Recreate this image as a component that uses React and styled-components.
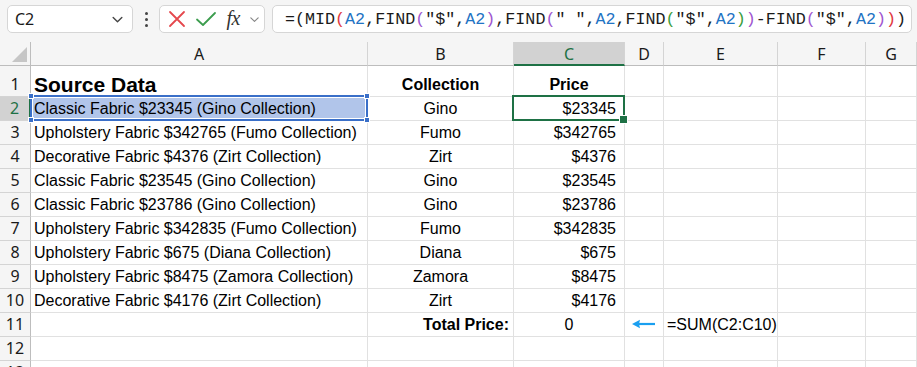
import React from "react";
import styled, { createGlobalStyle, css } from "styled-components";

const Global = createGlobalStyle`
  html, body { margin: 0; padding: 0; background: #ffffff; }
  body { width: 917px; height: 367px; overflow: hidden; }
  * { box-sizing: border-box; }
`;

const CELL_FONT = `"Liberation Sans", Arial, sans-serif`;
const UI_FONT = `"Noto Sans", "Liberation Sans", sans-serif`;

const Page = styled.div`
  width: 917px;
  height: 367px;
  overflow: hidden;
  display: flex;
  flex-direction: column;
  background: #fff;
`;

const Toolbar = styled.div`
  height: 42px;
  flex: none;
  background: #f5f5f5;
  display: flex;
  align-items: flex-start;
  padding: 5px 5px 0 7px;
`;

const Box = styled.div`
  height: 28px;
  background: #ffffff;
  border: 1px solid #d6d6d6;
  border-radius: 5px;
  display: flex;
  align-items: center;
`;

const NameBox = styled(Box)`
  width: 126px;
  padding: 0 8px 0 7px;
  justify-content: space-between;
  font-family: ${UI_FONT};
  font-size: 16px;
  color: #1a1a1a;
`;

const Dots = styled.div`
  width: 26px;
  height: 28px;
  display: flex;
  flex-direction: column;
  align-items: center;
  justify-content: center;
  gap: 3px;
  span {
    width: 3px;
    height: 3px;
    border-radius: 50%;
    background: #444;
  }
`;

const ActionBox = styled(Box)`
  width: 106px;
  padding: 0 4px 0 8px;
  justify-content: space-between;
`;

const Fx = styled.span`
  font-family: "Liberation Serif", "DejaVu Serif", serif;
  font-style: italic;
  font-size: 20px;
  color: #333;
  letter-spacing: -0.5px;
  margin-top: -2px;
`;

const FormulaBox = styled(Box)`
  margin-left: 7px;
  flex: 1;
  padding-left: 12px;
  font-family: "Liberation Mono", "DejaVu Sans Mono", monospace;
  font-size: 16.7px;
  color: #1a1a1a;
  white-space: pre;
`;

const Tok = styled.span`
  color: ${(p) => p.$c || "#1a1a1a"};
`;

const Sheet = styled.div`
  display: grid;
  grid-template-columns: 31px 337px 146px 111px 39px 114px 88px 1fr;
  grid-template-rows: 24px 31px repeat(12, 24px);
  font-family: ${CELL_FONT};
  font-size: 16px;
  color: #000;
`;

const Corner = styled.div`
  background: #f5f5f5;
  border-right: 1px solid #bdbdbd;
  border-bottom: 1px solid #bdbdbd;
  position: relative;
  &::after {
    content: "";
    position: absolute;
    right: 3px;
    bottom: 3px;
    width: 0;
    height: 0;
    border-left: 15px solid transparent;
    border-bottom: 15px solid #c6c6c6;
  }
`;

const ColHead = styled.div`
  background: ${(p) => (p.$active ? "#d2d2d2" : "#f5f5f5")};
  border-right: 1px solid #d4d4d4;
  border-bottom: ${(p) => (p.$active ? "2px solid #1e7145" : "1px solid #bdbdbd")};
  color: ${(p) => (p.$active ? "#1e7145" : "#1a1a1a")};
  font-family: ${UI_FONT};
  font-size: 16px;
  display: flex;
  align-items: center;
  justify-content: center;
  padding-top: ${(p) => (p.$active ? "1px" : "0")};
`;

const RowHead = styled.div`
  background: ${(p) => (p.$active ? "#d2d2d2" : "#f5f5f5")};
  border-right: ${(p) => (p.$active ? "2px solid #1e7145" : "1px solid #bdbdbd")};
  border-bottom: 1px solid #d4d4d4;
  color: ${(p) => (p.$active ? "#1e7145" : "#1a1a1a")};
  font-family: ${UI_FONT};
  font-size: 16px;
  display: flex;
  align-items: flex-end;
  justify-content: center;
  padding-bottom: 1px;
  line-height: 21px;
`;

const Cell = styled.div`
  position: relative;
  border-right: 1px solid #e1e1e1;
  border-bottom: 1px solid #e1e1e1;
  display: flex;
  align-items: ${(p) => (p.$middle ? "center" : "flex-end")};
  padding: 0 ${(p) => p.$pr || 3}px 1px 3px;
  line-height: 20px;
  white-space: nowrap;
  justify-content: ${(p) =>
    p.$align === "right" ? "flex-end" : p.$align === "center" ? "center" : "flex-start"};
  font-weight: ${(p) => (p.$bold ? 700 : 400)};
  font-size: ${(p) => p.$size || 16}px;
  background: ${(p) => p.$fill || "transparent"};
  ${(p) =>
    p.$overflow &&
    css`
      overflow: visible;
      z-index: 1;
    `}
`;

const RangeMark = styled.div`
  position: absolute;
  left: -1px;
  top: -2px;
  right: -1px;
  bottom: -1px;
  border: 2px solid #3a6fc8;
  box-shadow: inset 0 0 0 1px #ffffff;
  pointer-events: none;
  z-index: 3;
`;

const Handle = styled.span`
  position: absolute;
  width: 6px;
  height: 6px;
  background: #3a6fc8;
  border: 1px solid #ffffff;
  ${(p) => (p.$t ? "top: -4px;" : "bottom: -4px;")}
  ${(p) => (p.$l ? "left: -4px;" : "right: -4px;")}
`;

const ActiveMark = styled.div`
  position: absolute;
  left: -2px;
  top: -2px;
  right: -1px;
  bottom: -1px;
  border: 2px solid #1e7145;
  pointer-events: none;
  z-index: 3;
  &::after {
    content: "";
    position: absolute;
    right: -5px;
    bottom: -5px;
    width: 7px;
    height: 7px;
    background: #1e7145;
    border: 1px solid #fff;
  }
`;

const Chevron = ({ size = 12, color = "#555" }) => (
  <svg width={size} height={size} viewBox="0 0 12 12">
    <path d="M2 4.2 L6 8 L10 4.2" fill="none" stroke={color} strokeWidth="1.3" strokeLinecap="round" strokeLinejoin="round" />
  </svg>
);

const CrossIcon = () => (
  <svg width="18" height="18" viewBox="0 0 18 18">
    <path d="M2 2 L16 16 M16 2 L2 16" stroke="#e5484d" strokeWidth="1.8" strokeLinecap="round" />
  </svg>
);

const CheckIcon = () => (
  <svg width="22" height="18" viewBox="0 0 22 18">
    <path d="M2 9.5 L8 15 L20 3" fill="none" stroke="#3c9d4e" strokeWidth="1.8" strokeLinecap="round" strokeLinejoin="round" />
  </svg>
);

const ArrowIcon = () => (
  <svg width="26" height="10" viewBox="0 0 26 10">
    <path d="M7 5 L24 5" stroke="#1a9ff0" strokeWidth="2.2" />
    <path d="M1 5 L9 0.8 L8 5 L9 9.2 Z" fill="#1a9ff0" />
  </svg>
);

const RED = "#e0383e";
const PURPLE = "#a056d0";
const GREEN = "#3c9d3c";
const BLUE = "#1f74c4";

const formula = [
  ["=(", null],
  ["MID", null],
  ["(", RED],
  ["A2", BLUE],
  [",FIND", null],
  ["(", PURPLE],
  ['"$",', null],
  ["A2", BLUE],
  [")", PURPLE],
  [",FIND", null],
  ["(", PURPLE],
  ['" ",', null],
  ["A2", BLUE],
  [",FIND", null],
  ["(", GREEN],
  ['"$",', null],
  ["A2", BLUE],
  [")", GREEN],
  [")", PURPLE],
  ["-FIND", null],
  ["(", PURPLE],
  ['"$",', null],
  ["A2", BLUE],
  [")", PURPLE],
  [")", RED],
  [")", null],
];

const data = [
  ["Classic Fabric $23345 (Gino Collection)", "Gino", "$23345"],
  ["Upholstery Fabric $342765 (Fumo Collection)", "Fumo", "$342765"],
  ["Decorative Fabric $4376 (Zirt Collection)", "Zirt", "$4376"],
  ["Classic Fabric $23545 (Gino Collection)", "Gino", "$23545"],
  ["Classic Fabric $23786 (Gino Collection)", "Gino", "$23786"],
  ["Upholstery Fabric $342835 (Fumo Collection)", "Fumo", "$342835"],
  ["Upholstery Fabric $675 (Diana Collection)", "Diana", "$675"],
  ["Upholstery Fabric $8475 (Zamora Collection)", "Zamora", "$8475"],
  ["Decorative Fabric $4176 (Zirt Collection)", "Zirt", "$4176"],
];

const colLetters = ["A", "B", "C", "D", "E", "F", "G"];

function EmptyCells({ n }) {
  return Array.from({ length: n }, (_, i) => <Cell key={i} />);
}

export default function App() {
  return (
    <Page>
      <Global />
      <Toolbar>
        <NameBox>
          <span>C2</span>
          <Chevron size={13} color="#444" />
        </NameBox>
        <Dots>
          <span />
          <span />
          <span />
        </Dots>
        <ActionBox>
          <CrossIcon />
          <CheckIcon />
          <Fx>fx</Fx>
          <Chevron size={11} color="#888" />
        </ActionBox>
        <FormulaBox>
          {formula.map(([t, c], i) => (
            <Tok key={i} $c={c}>
              {t}
            </Tok>
          ))}
        </FormulaBox>
      </Toolbar>
      <Sheet>
        <Corner />
        {colLetters.map((l) => (
          <ColHead key={l} $active={l === "C"}>
            {l}
          </ColHead>
        ))}

        <RowHead>1</RowHead>
        <Cell $bold $size={21}>Source Data</Cell>
        <Cell $bold $align="center">Collection</Cell>
        <Cell $bold $align="center">Price</Cell>
        <EmptyCells n={4} />

        {data.map(([a, b, c], i) => {
          const row = i + 2;
          const first = row === 2;
          return (
            <React.Fragment key={row}>
              <RowHead $active={first}>{row}</RowHead>
              <Cell $fill={first ? "#b1c5ea" : undefined}>
                {a}
                {first && (
                  <RangeMark>
                    <Handle $t $l />
                    <Handle $t />
                    <Handle $l />
                    <Handle />
                  </RangeMark>
                )}
              </Cell>
              <Cell $align="center">{b}</Cell>
              <Cell $align="right" $pr={8}>
                {c}
                {first && <ActiveMark />}
              </Cell>
              <EmptyCells n={4} />
            </React.Fragment>
          );
        })}

        <RowHead>11</RowHead>
        <Cell />
        <Cell $bold $align="right" $pr={4}>Total Price:</Cell>
        <Cell $align="center">0</Cell>
        <Cell $align="center" $middle>
          <ArrowIcon />
        </Cell>
        <Cell $overflow>=SUM(C2:C10)</Cell>
        <EmptyCells n={2} />

        <RowHead>12</RowHead>
        <EmptyCells n={7} />
        <RowHead>13</RowHead>
        <EmptyCells n={7} />
      </Sheet>
    </Page>
  );
}
